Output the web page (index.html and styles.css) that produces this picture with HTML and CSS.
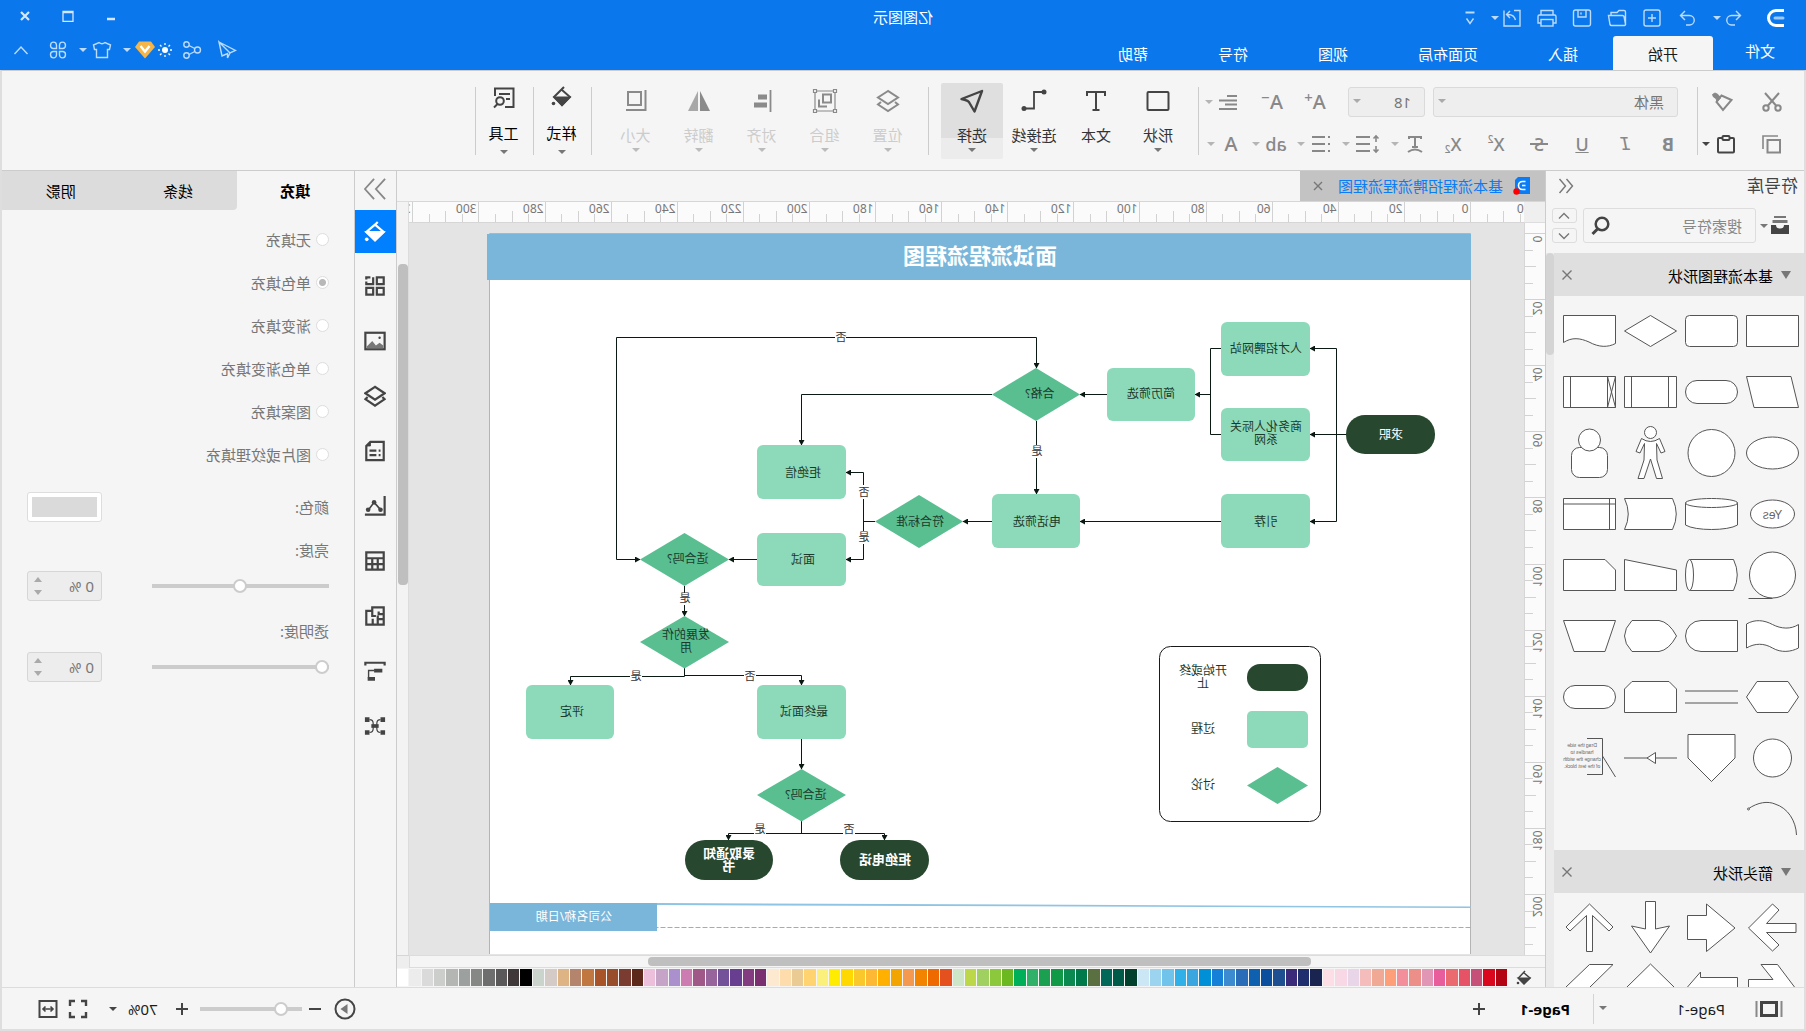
FILE: index.html
```html
<!DOCTYPE html>
<html lang="zh-CN">
<head>
<meta charset="utf-8">
<meta name="viewport" content="width=device-width, initial-scale=1">
<title>亿图图示</title>
<link rel="stylesheet" href="styles.css">
</head>
<body>
<div class="window">
  <header class="topbar">
    <div class="titlebar">
      <div class="quick">
        <svg class="logo" width="20" height="22" viewBox="0 0 20 22"><path d="M2 3.500H10A7.500 7.500 0 0 1 10 18.500H2" fill="none" stroke="#fff" stroke-width="3"/><path d="M3 11H11" stroke="#9cc9fa" stroke-width="3" stroke-linecap="round"/></svg>
        <span class="pair tight">
          <button class="tool" aria-label="撤销"><svg class="thin" width="20" height="20" viewBox="0 0 20 20"><path d="M8 3L3.500 7.500L8 12M4 7.500H12.500A4.500 4.500 0 0 1 12.500 17H9"/></svg></button>
          <button class="caret" aria-label="更多撤销"></button>
        </span>
        <button class="tool" aria-label="重做"><svg class="thin" width="20" height="20" viewBox="0 0 20 20"><path d="M12 3L16.500 7.500L12 12M16 7.500H7.500A4.500 4.500 0 0 0 7.500 17H11"/></svg></button>
        <button class="tool" aria-label="新建"><svg class="thin" width="20" height="20" viewBox="0 0 20 20"><rect x="2" y="2" width="16" height="16" rx="2"/><path d="M10 6V14M6 10H14"/></svg></button>
        <button class="tool" aria-label="打开"><svg class="thin" width="20" height="20" viewBox="0 0 20 20"><path d="M1.500 17V4Q1.500 2.500 3 2.500H8L10 4.500H16V7.500M1.500 16L3 8.500Q3.200 7.500 4.500 7.500H18.500L17 16.500Q16.800 17.500 15.500 17.500H2.500Q1.500 17.500 1.500 16"/></svg></button>
        <button class="tool" aria-label="保存"><svg class="thin" width="20" height="20" viewBox="0 0 20 20"><rect x="1.500" y="2" width="17" height="16" rx="2"/><path d="M6 2V9H14V2M11 4.500V6.500"/></svg></button>
        <button class="tool" aria-label="打印"><svg class="thin" width="20" height="20" viewBox="0 0 20 20"><path d="M4 7V2.500H16V7M4 15H1V8.500Q1 7 2.500 7H17.500Q19 7 19 8.500V15H16"/><rect x="4" y="11.500" width="12" height="6.500"/></svg></button>
        <span class="pair tight">
          <button class="tool" aria-label="导出"><svg class="thin" width="20" height="20" viewBox="0 0 20 20"><path d="M8 2.500H2V18H18V11M18 11L18 2.500M6.500 12Q8 6 15 6.500M12 3L15.500 6.500L12 10"/></svg></button>
          <button class="caret" aria-label="导出选项"></button>
        </span>
        <button class="tool narrow" aria-label="自定义"><svg class="thin" width="10" height="16" viewBox="0 0 10 16"><path d="M0.500 2.500H9.500" stroke-width="2"/><path d="M1.500 8.500L5 13.500L8.500 8.500"/></svg></button>
      </div>
      <h1 class="apptitle">亿图图示</h1>
      <div class="winctl">
        <button aria-label="最小化"><svg width="12" height="12" viewBox="0 0 12 12"><path d="M2 9H10" stroke-width="2.500"/></svg></button>
        <button aria-label="最大化"><svg width="12" height="12" viewBox="0 0 12 12"><path d="M1 1.500H11V11.500H1ZM1 2.500H11" stroke-width="1.300"/></svg></button>
        <button aria-label="关闭"><svg width="12" height="12" viewBox="0 0 12 12"><path d="M2 2L10 10M10 2L2 10" stroke-width="2.200"/></svg></button>
      </div>
    </div>
    <div class="menubar">
      <nav class="menus">
        <a href="#" class="menu file">文件</a>
        <a href="#" class="menu active">开始</a>
        <a href="#" class="menu">插入</a>
        <a href="#" class="menu">页面布局</a>
        <a href="#" class="menu">视图</a>
        <a href="#" class="menu">符号</a>
        <a href="#" class="menu">帮助</a>
      </nav>
      <div class="menutools">
        <button class="tool" aria-label="发送"><svg class="thin" width="20" height="20" viewBox="0 0 20 20"><path d="M18 2L1.500 10.500L7 13L18 2L15 16L9.500 13.500V18L7 13"/></svg></button>
        <button class="tool gapleft" aria-label="共享"><svg class="thin" width="20" height="20" viewBox="0 0 20 20"><circle cx="4.500" cy="10" r="3"/><circle cx="15.500" cy="4.500" r="2.700"/><circle cx="15.500" cy="15.500" r="2.700"/><path d="M7.200 8.500L13 5.500M7.200 11.500L13 14.500"/></svg></button>
        <span class="pair vip">
          <svg width="14" height="14" viewBox="0 0 14 14"><circle cx="7" cy="7" r="3" fill="#fff"/><path d="M7 0V2M7 12V14M0 7H2M12 7H14M2 2L3.500 3.500M10.500 10.500L12 12M12 2L10.500 3.500M3.500 10.500L2 12" stroke="#fff" stroke-width="1.300"/></svg>
          <button class="tool" aria-label="会员"><svg width="20" height="18" viewBox="0 0 20 18"><path d="M4 0.500H16L20 6L10 17.500L0 6Z" fill="#f5b548"/><path d="M5.500 5L10 10.500L14.500 5" fill="none" stroke="#fff" stroke-width="2.400"/></svg></button>
          <button class="caret" aria-label="会员菜单"></button>
        </span>
        <span class="pair">
          <button class="tool" aria-label="主题"><svg class="thin" width="20" height="20" viewBox="0 0 20 20"><path d="M7 2.500Q10 5 13 2.500L18.500 5L17.500 9.500H15.500V17.500H4.500V9.500H2.500L1.500 5Z"/></svg></button>
          <button class="caret" aria-label="主题菜单"></button>
        </span>
        <button class="tool" aria-label="应用"><svg class="thin" width="20" height="20" viewBox="0 0 20 20"><path d="M8.500 8.500H5A3 3.200 0 1 1 8.500 5ZM11.500 8.500H15A3 3.200 0 1 0 11.500 5ZM8.500 11.500H5A3 3.200 0 1 0 8.500 15ZM11.500 11.500H15A3 3.200 0 1 1 11.500 15Z"/></svg></button>
        <button class="tool collapse" aria-label="收起"><svg class="thin" width="16" height="12" viewBox="0 0 16 12"><path d="M1.500 10L8 3L14.500 10"/></svg></button>
      </div>
    </div>
  </header>

  <div class="frame">
    <section class="ribbon" aria-label="开始">
      <div class="clip">
        <div class="row wide">
          <button class="tool" aria-label="剪切"><svg class="bold" width="20" height="20" viewBox="0 0 20 20"><path d="M3 1L14 13.500M17 1L6 13.500"/><circle cx="4" cy="16" r="2.700"/><circle cx="16" cy="16" r="2.700"/></svg></button>
          <button class="tool" aria-label="格式刷"><svg class="bold" width="22" height="20" viewBox="0 0 22 20"><path d="M1.500 8L11.500 3.500L16.500 10L10 18Z"/><path d="M12.500 6L15 2.500L18 1L20.500 2.500L19.500 5L17 6.500L16 9.500Z" fill="currentColor" stroke-width="1"/></svg></button>
        </div>
        <div class="row">
          <button class="tool" aria-label="复制"><svg class="bold" width="20" height="20" viewBox="0 0 20 20"><rect x="2" y="6" width="12.500" height="12.500"/><path d="M4 2H19V15" stroke-width="1.600"/></svg></button>
          <button class="tool dark paste" aria-label="粘贴"><svg class="bold" width="20" height="20" viewBox="0 0 20 20"><rect x="2" y="4" width="16" height="14.500" rx="1"/><rect x="6.500" y="2" width="7" height="4" rx="1" fill="#f5f5f5"/></svg></button>
          <button class="caret dark" aria-label="粘贴选项"></button>
        </div>
      </div>
      <div class="sep near"></div>
      <div class="fonts">
        <div class="row">
          <span class="combo face"><select aria-label="字体"><option>黑体</option></select></span>
          <span class="combo size"><select aria-label="字号"><option>18</option></select></span>
          <span class="adjust">
            <button class="tool glyph large" aria-label="增大字号">A<sup>+</sup></button>
            <button class="tool glyph large" aria-label="减小字号">A<sup>−</sup></button>
            <span class="split"><button class="tool" aria-label="对齐方式"><svg class="bold" width="20" height="20" viewBox="0 0 20 20"><path d="M2 4H12M2 8.500H20M2 12.500H14M2 17H20"/></svg></button><button class="caret" aria-label="对齐选项"></button></span>
          </span>
        </div>
        <div class="row">
          <span class="styles">
            <button class="tool glyph"><b>B</b></button>
            <button class="tool glyph slab"><i>I</i></button>
            <button class="tool glyph"><u>U</u></button>
            <button class="tool glyph strike">S</button>
            <button class="tool glyph">X<sup>2</sup></button>
            <button class="tool glyph">X<sub>2</sub></button>
          </span>
          <span class="splits">
            <span class="split"><button class="tool" aria-label="文字效果"><svg class="bold" width="20" height="20" viewBox="0 0 20 20"><path d="M4 5V3H16V5M10 3V13M7 13H13M3 18Q10 13 17 18"/></svg></button><button class="caret" aria-label="文字效果选项"></button></span>
            <span class="split"><button class="tool spacing" aria-label="行距"><svg class="bold" width="24" height="20" viewBox="0 0 24 20"><path d="M10 3H24M10 10H24M10 17H24"/><path d="M4 2.500V8M1.500 4.500L4 2L6.500 4.500M4 12V17.500M1.500 15.500L4 18L6.500 15.500" stroke-width="1.600"/></svg></button><button class="caret" aria-label="行距选项"></button></span>
            <span class="split"><button class="tool" aria-label="项目符号"><svg class="bold" width="20" height="20" viewBox="0 0 20 20"><path d="M1 3H3M6 3H19M1 10H3M6 10H19M1 17H3M6 17H19"/></svg></button><button class="caret" aria-label="项目符号选项"></button></span>
            <span class="split"><button class="tool glyph">ab</button><button class="caret" aria-label="高亮选项"></button></span>
            <span class="split"><button class="tool glyph large">A</button><button class="caret" aria-label="字体颜色选项"></button></span>
          </span>
        </div>
      </div>
      <div class="sep"></div>
      <div class="big">
        <button class="cmd"><svg class="bold" width="24" height="24" viewBox="0 0 24 24"><rect x="1.500" y="3" width="21" height="18" rx="1"/></svg><span>形状</span><i class="tri"></i></button>
        <button class="cmd"><svg class="bold" width="24" height="24" viewBox="0 0 24 24"><path d="M3 7V3H21V7M12 3V21M8.500 21H15.500"/></svg><span>文本</span><i class="tri none"></i></button>
        <button class="cmd"><svg class="bold" width="26" height="24" viewBox="0 0 26 24"><path d="M5 3H13V19.500H21" stroke-width="1.800"/><circle cx="3" cy="3" r="2.500" fill="currentColor" stroke="none"/><circle cx="23" cy="19.500" r="2.500" fill="currentColor" stroke="none"/></svg><span>连接线</span><i class="tri"></i></button>
        <button class="cmd on"><svg class="bold" width="24" height="24" viewBox="0 0 24 24"><path d="M2 2L22.500 10Q15 11.500 14.500 14L9.500 22.500Z" stroke-width="2.400" stroke-linejoin="round"/></svg><span>选择</span><i class="tri"></i></button>
      </div>
      <div class="sep far"></div>
      <div class="big arrange">
        <button class="cmd" disabled><svg class="bold" width="24" height="24" viewBox="0 0 24 24"><path d="M12 2L22 8.500L12 15L2 8.500ZM5 13L2 15.500L12 22L22 15.500L19 13"/></svg><span>位置</span><i class="tri"></i></button>
        <button class="cmd" disabled><svg class="bold" width="26" height="26" viewBox="0 0 26 26"><path d="M3 3H23V23H3Z" stroke-width="1.200"/><rect x="7" y="6.500" width="8" height="8"/><path d="M11 18.500H19V11.500"/><path d="M1.500 1.500H4.500V4.500H1.500ZM21.500 1.500H24.500V4.500H21.500ZM1.500 21.500H4.500V24.500H1.500ZM21.500 21.500H24.500V24.500H21.500Z" fill="#f5f5f5" stroke-width="1.200"/></svg><span>组合</span><i class="tri"></i></button>
        <button class="cmd" disabled><svg class="bold" width="24" height="24" viewBox="0 0 24 24"><path d="M3.500 1V23" stroke-width="1.800"/><path d="M7 8H16M7 16H20" stroke-width="5"/></svg><span>对齐</span><i class="tri"></i></button>
        <button class="cmd" disabled><svg width="24" height="24" viewBox="0 0 24 24"><path d="M1 22L11 2V22Z" fill="#8a8a8a"/><path d="M13 2L23 22H13Z" fill="#a8a8a8"/></svg><span>翻转</span><i class="tri"></i></button>
        <button class="cmd" disabled><svg class="bold" width="24" height="24" viewBox="0 0 24 24"><rect x="7" y="3" width="13" height="13"/><path d="M2.500 1V21M1.500 21H22"/></svg><span>大小</span><i class="tri"></i></button>
      </div>
      <div class="sep far"></div>
      <div class="big last"><button class="cmd"><svg class="bold" width="24" height="24" viewBox="0 0 24 24"><path d="M10 1L13 4L20 11L12 19L4 11L12 4"/><path d="M5 11.500H19L12 19Z" fill="currentColor"/><circle cx="20.500" cy="17.500" r="1.800" fill="currentColor" stroke="none"/></svg><span>样式</span><i class="tri"></i></button></div>
      <div class="sep"></div>
      <div class="big last"><button class="cmd"><svg class="bold" width="24" height="24" viewBox="0 0 24 24"><path d="M11 21H2.500V2.500H21V10M6 8H17M6 13H10"/><circle cx="16" cy="15" r="3.800"/><path d="M18.500 18L22 21.500"/></svg><span>工具</span><i class="tri"></i></button></div>
      <div class="sep"></div>
    </section>

    <main class="work">
      <aside class="library">
        <div class="libhead"><h2>符号库</h2><button aria-label="收起符号库"><svg class="thin" width="16" height="16" viewBox="0 0 16 16"><path d="M7.500 1L1.500 8L7.500 15M14.500 1L8.500 8L14.500 15"/></svg></button></div>
        <div class="libsearch">
          <button class="tool dark" aria-label="符号分类"><svg width="20" height="20" viewBox="0 0 20 20"><path d="M4 1H16V3H4ZM2.500 5H17.500V8H2.500Z" fill="#777"/><path d="M1 10H6Q6 13.500 10 13.500T14 10H19V19H1Z" fill="#444"/></svg></button>
          <button class="caret dark" aria-label="分类选项"></button>
          <label class="searchbox"><input type="text" placeholder="搜索符号" aria-label="搜索符号"><svg width="20" height="20" viewBox="0 0 20 20"><circle cx="9" cy="8" r="6.300" fill="none" stroke="#444" stroke-width="2.500"/><path d="M13.500 13L18.500 18" stroke="#444" stroke-width="3"/></svg></label>
          <span class="updown"><button aria-label="上一个"><svg class="thin" width="12" height="8" viewBox="0 0 12 8"><path d="M1 6.500L6 1.500L11 6.500"/></svg></button><button aria-label="下一个"><svg class="thin" width="12" height="8" viewBox="0 0 12 8"><path d="M1 1.500L6 6.500L11 1.500"/></svg></button></span>
        </div>
        <div class="libbody">
          <div class="liblist">
            <div class="sechead"><i class="fold"></i><h3>基本流程图形状</h3><button aria-label="关闭"><svg class="thin" width="12" height="12" viewBox="0 0 12 12"><path d="M1.500 1.500L10.500 10.500M10.500 1.500L1.500 10.500"/></svg></button></div>
            <div class="shapes">
              <svg viewBox="0 0 61 61"><path d="M4.500 15.500H56.500V46.500H4.500Z"/></svg>
              <svg viewBox="0 0 61 61"><rect x="4.500" y="15.500" width="52" height="31" rx="4"/></svg>
              <svg viewBox="0 0 61 61"><path d="M4.500 31L30.500 15.500L56.500 31L30.500 46.500Z"/></svg>
              <svg viewBox="0 0 61 61"><path d="M4.500 15.500H56.500V42.500C48 37 40 38 31 42C21 47.500 12 47.500 4.500 43.500Z"/></svg>
              <svg viewBox="0 0 61 61"><path d="M12 15.500H56.500L49 46.500H4.500Z"/></svg>
              <svg viewBox="0 0 61 61"><rect x="4.500" y="19.500" width="52" height="23" rx="11.500"/></svg>
              <svg viewBox="0 0 61 61"><path d="M4.500 15.500H56.500V46.500H4.500ZM12.500 15.500V46.500M49.500 15.500V46.500"/></svg>
              <svg viewBox="0 0 61 61"><path d="M4.500 15.500H56.500V46.500H4.500ZM12.500 15.500V46.500M49.500 15.500V46.500M4.500 15.500L12.500 46.500M12.500 15.500L4.500 46.500"/></svg>
              <svg viewBox="0 0 61 61"><ellipse cx="30.500" cy="31" rx="26" ry="16"/></svg>
              <svg viewBox="0 0 61 61"><circle cx="30.500" cy="31" r="23.500"/></svg>
              <svg viewBox="0 0 61 61"><circle cx="30.500" cy="10.500" r="6"/><path d="M21.500 16.500L16 29.500L20 31L24.500 21.500L24 38L18.500 56.500H24.500L30.500 37L37 56.500H43L37 38L36.500 21.500L41 31L45 29.500L39.500 16.500Q30.500 22.500 21.500 16.500Z"/></svg>
              <svg viewBox="0 0 61 61"><rect x="12.500" y="25.500" width="36" height="30" rx="8"/><circle cx="30.500" cy="18" r="11"/></svg>
              <svg viewBox="0 0 61 61"><ellipse cx="30.500" cy="31" rx="22" ry="14"/><text x="30.500" y="36" font-size="12" text-anchor="middle">Yes</text></svg>
              <svg viewBox="0 0 61 61"><path d="M4.500 19.500V42C14 48 47 48 56.500 42V19.500"/><ellipse cx="30.500" cy="20" rx="26" ry="4.500"/></svg>
              <svg viewBox="0 0 61 61"><path d="M8.500 15.500H56.500Q49 31 56.500 46.500H8.500Q1 31 8.500 15.500Z"/></svg>
              <svg viewBox="0 0 61 61"><path d="M4.500 15.500H56.500V46.500H4.500ZM10.500 15.500V46.500M4.500 21H56.500"/></svg>
              <svg viewBox="0 0 61 61"><circle cx="30.500" cy="31" r="23"/><path d="M30.500 54.500H54.500"/></svg>
              <svg viewBox="0 0 61 61"><path d="M52.500 15.500H8.500Q1 31 8.500 46.500H52.500"/><ellipse cx="52.500" cy="31" rx="4" ry="15.500"/></svg>
              <svg viewBox="0 0 61 61"><path d="M56.500 15.500L4.500 26V46.500H56.500Z"/></svg>
              <svg viewBox="0 0 61 61"><path d="M56.500 15.500H15L4.500 26V46.500H56.500Z"/></svg>
              <svg viewBox="0 0 61 61"><path d="M4.500 19.500C12 24.500 22 24 30.500 19.500C39 15 48 14 56.500 19V43C48 38 39 38 30.500 43C22 48 12 47 4.500 43Z"/></svg>
              <svg viewBox="0 0 61 61"><path d="M4.500 15.500H41A15.500 15.500 0 0 1 41 46.500H4.500Z"/></svg>
              <svg viewBox="0 0 61 61"><path d="M4.500 31Q12 17 22 15.500H49Q64 31 49 46.500H22Q12 45 4.500 31Z"/></svg>
              <svg viewBox="0 0 61 61"><path d="M4.500 15.500H56.500L46 46.500H15Z"/></svg>
              <svg viewBox="0 0 61 61"><path d="M4.500 31L15 15.500H46L56.500 31L46 46.500H15Z"/></svg>
              <svg viewBox="0 0 61 61"><path d="M4 25H57M4 37H57"/></svg>
              <svg viewBox="0 0 61 61"><path d="M12 15.500H49L56.500 23V46.500H4.500V23Z"/></svg>
              <svg viewBox="0 0 61 61"><rect x="4.500" y="19.500" width="52" height="23" rx="11.500"/></svg>
              <svg viewBox="0 0 61 61"><circle cx="30.500" cy="31" r="19"/></svg>
              <svg viewBox="0 0 61 61"><path d="M7 7.500H54V31L30.500 54.500L7 31Z"/></svg>
              <svg viewBox="0 0 61 61"><path d="M4 31H57"/><path d="M25.500 25.500V36.500L34 31Z"/></svg>
              <svg viewBox="0 0 61 61"><path d="M33 11.500H17.500V47.500H33M17.500 29L4.500 50" fill="none"/><g class="note"><text x="38" y="20">Drag the side</text><text x="38" y="27">handles to</text><text x="38" y="34">change the width</text><text x="38" y="41">of the text block.</text></g></svg>
              <svg viewBox="0 0 61 61"><path d="M55 21C45 14 35 13 28 16C15 20 7 33 6.500 47" fill="none"/><circle cx="54.500" cy="21" r="1"/></svg>
            </div>
            <div class="sechead"><i class="fold"></i><h3>箭头形状</h3><button aria-label="关闭"><svg class="thin" width="12" height="12" viewBox="0 0 12 12"><path d="M1.500 1.500L10.500 10.500M10.500 1.500L1.500 10.500"/></svg></button></div>
            <div class="shapes">
              <svg viewBox="0 0 61 61"><path d="M54.500 31L30.500 7L24 13L36.500 26.500H7V35.500H36.500L24 48L30.500 54Z"/></svg>
              <svg viewBox="0 0 61 61"><path d="M7 31L35.500 7V18.500H54.500V42.500H35.500V54.500Z"/></svg>
              <svg viewBox="0 0 61 61"><path d="M25.500 4.500H35.500V32L49.500 29L30.500 56L11.500 29L25.500 32Z"/></svg>
              <svg viewBox="0 0 61 61"><path d="M30.500 7L54 30L50 34L33.500 18.500V54.500H27.500V18.500L11 34L7 30Z"/></svg>
              <svg viewBox="0 0 61 61"><path d="M42 6.500H25.500L7 31L25.500 56H42L30 40H54.500V21.500H30Z"/></svg>
              <svg viewBox="0 0 61 61"><path d="M54.500 29L41.500 14V19.500H4.500V40H41.500V46Z"/></svg>
              <svg viewBox="0 0 61 61"><path d="M30.500 6L54 29L30.500 52L7 29Z"/></svg>
              <svg viewBox="0 0 61 61"><path d="M7 6.500H30.500L54 29L30.500 52H7L30 29Z"/></svg>
            </div>
          </div>
          <div class="track"><div class="thumb"></div></div>
        </div>
      </aside>

      <section class="editor">
        <div class="doctabs">
          <a href="#" class="doctab"><svg width="18" height="20" viewBox="0 0 18 20"><path d="M1 1H13L16 4V18H1Z" fill="#0a7cf5"/><path d="M5.500 5.500H8.500A4 4 0 0 1 8.500 13.500H5.500M5.500 9.500H9" fill="none" stroke="#fff" stroke-width="1.600"/><circle cx="14.500" cy="15.500" r="3.200" fill="#f00"/></svg><span>基本流程招聘流程流程图</span></a>
          <button class="tabclose" aria-label="关闭标签"><svg class="thin" width="12" height="12" viewBox="0 0 12 12"><path d="M2 2L10 10M10 2L2 10"/></svg></button>
        </div>
        <div class="sheet">
          <div class="corner"></div>
          <div class="hruler"><svg id="hruler" width="1800" height="21"></svg></div>
          <div class="vruler"><svg id="vruler" width="21" height="1400"></svg></div>
          <div class="canvas">
            <svg class="diagram" width="1115" height="731" viewBox="282 223 1115 731">
              <defs><marker id="tip" markerWidth="6" markerHeight="6" refX="5" refY="3" orient="auto-start-reverse" markerUnits="userSpaceOnUse"><path d="M0 0L5.500 3L0 6Z" fill="#0a1a12"/></marker></defs>
              <path class="page" d="M335.500 233.500H1316.500V960H335.500Z"/>
              <path class="band" d="M335 234H1319V280H335Z"/>
              <text class="heading" x="826" y="264">面试流程流程图</text>
              <g class="wires">
                <path d="M460 434.500H496" marker-end="url(#tip)"/>
                <path d="M496 348.500H469.500V521.500H496" marker-start="url(#tip)" marker-end="url(#tip)"/>
                <path d="M585 348.500H595.500V434.500H585"/>
                <path d="M595.500 394.500H611" marker-end="url(#tip)"/>
                <path d="M699 394.500H726" marker-end="url(#tip)"/>
                <path d="M585 521.500H726" marker-end="url(#tip)"/>
                <path d="M769.500 421V494" marker-end="url(#tip)"/>
                <path d="M814 394.500H1004.500V445" marker-end="url(#tip)"/>
                <path d="M769.500 368V337.500H1189.500V559.500H1166" marker-start="url(#tip)" marker-end="url(#tip)"/>
                <path d="M814 521.500H843" marker-end="url(#tip)"/>
                <path d="M931 521.500H942.500"/>
                <path d="M960 472.500H942.500V559.500H960" marker-start="url(#tip)" marker-end="url(#tip)"/>
                <path d="M1049 559.500H1077" marker-end="url(#tip)"/>
                <path d="M1121.500 586V616" marker-end="url(#tip)"/>
                <path d="M1121.500 668V675.500H1004.500V685" marker-end="url(#tip)"/>
                <path d="M1121.500 668V676.500H1235.500V685" marker-end="url(#tip)"/>
                <path d="M1004.500 739V769" marker-end="url(#tip)"/>
                <path d="M1004.500 821V833.500"/>
                <path d="M1077.500 840V833.500H921.500V840" marker-start="url(#tip)" marker-end="url(#tip)"/>
              </g>
              <g class="start">
                <rect x="371" y="415" width="89" height="39" rx="19"/>
                <rect x="877" y="840" width="89" height="40" rx="20"/>
                <rect x="1033" y="840" width="88" height="40" rx="20"/>
              </g>
              <g class="process">
                <rect x="496" y="322" width="89" height="54" rx="6"/>
                <rect x="496" y="408" width="89" height="53" rx="6"/>
                <rect x="496" y="494" width="89" height="54" rx="6"/>
                <rect x="611" y="368" width="88" height="53" rx="6"/>
                <rect x="726" y="494" width="88" height="54" rx="6"/>
                <rect x="960" y="445" width="89" height="54" rx="6"/>
                <rect x="960" y="533" width="89" height="53" rx="6"/>
                <rect x="960" y="685" width="89" height="54" rx="6"/>
                <rect x="1192" y="685" width="88" height="54" rx="6"/>
              </g>
              <g class="decision">
                <path d="M726 394.500L770 368L814 394.500L770 421Z"/>
                <path d="M843 521.500L887 495L931 521.500L887 548Z"/>
                <path d="M1077 559.500L1121.500 533L1166 559.500L1121.500 586Z"/>
                <path d="M1077 642L1121.500 616L1166 642L1121.500 668.500Z"/>
                <path d="M960 795L1004.500 769L1049 795L1004.500 821.500Z"/>
              </g>
              <g class="gaps">
                <rect x="960" y="331" width="11" height="12"/><rect x="764" y="445" width="11" height="13"/>
                <rect x="937" y="485" width="11" height="14"/><rect x="937" y="531" width="11" height="13"/>
                <rect x="1115" y="593" width="12" height="12"/><rect x="1050" y="670" width="12" height="12"/>
                <rect x="1164" y="670" width="12" height="12"/><rect x="1040" y="828" width="12" height="10"/><rect x="951" y="828" width="12" height="10"/>
              </g>
              <g class="labels">
                <text class="light" x="415" y="439">求职</text>
                <text x="540" y="353">人才招聘网站</text>
                <text x="540" y="431">商务化人际关</text><text x="540" y="444">系网</text>
                <text x="540" y="526">引荐</text>
                <text x="655" y="398">简历筛选</text>
                <text x="766" y="398">合格?</text>
                <text x="769" y="526">电话筛选</text>
                <text x="886" y="526">符合标准</text>
                <text x="1003" y="477">拒绝信</text>
                <text x="1003" y="564">面试</text>
                <text x="1118" y="563">适合吗?</text>
                <text x="1120" y="639">发展的作</text><text x="1120" y="652">用</text>
                <text x="1002" y="716">最终面试</text>
                <text x="1234" y="716">评定</text>
                <text x="1000" y="799">适合吗?</text>
                <text class="light strong" x="921" y="864">拒绝电话</text>
                <text class="light strong" x="1077" y="858">录取通知</text><text class="light strong" x="1077" y="871">书</text>
              </g>
              <g class="labels small">
                <text x="965" y="341">否</text><text x="769" y="455">是</text><text x="942" y="496">否</text><text x="942" y="541">是</text>
                <text x="1121" y="602">是</text><text x="1056" y="680">否</text><text x="1170" y="680">是</text><text x="957" y="833">否</text><text x="1046" y="833">是</text>
              </g>
              <rect class="legend" x="485.500" y="646.500" width="161" height="175" rx="11"/>
              <g class="start"><rect x="498" y="664" width="61" height="27" rx="13"/></g>
              <g class="process"><rect x="498" y="711" width="61" height="37" rx="5"/></g>
              <g class="decision"><path d="M498 785.500L528.500 767L559 785.500L528.500 804Z"/></g>
              <g class="labels"><text x="603" y="675">开始或终</text><text x="603" y="688">止</text><text x="603" y="733">过程</text><text x="603" y="789">讨论</text></g>
              <path class="taper" d="M335 906.500V908L1149 905V903Z"/>
              <path class="dashes" d="M335.500 927.500H1149"/>
              <path class="band" d="M1149 903H1316V931H1149Z"/>
              <g class="labels"><text class="light" x="1232" y="921">公司名称/日期</text></g>
            </svg>
          </div>
          <div class="vscroll"><div class="thumb"></div></div>
          <div class="hscroll"><div class="thumb"></div></div>
          <div class="corner end"></div>
        </div>
        <div class="palette">
          <button class="tool dark" aria-label="填充颜色"><svg class="bold" width="16" height="16" viewBox="0 0 16 16"><path d="M7 1L13.500 8L8 13.500L2 8L8.500 2.500" stroke-width="1.500"/><path d="M3 8.500H13L8 13.500Z" fill="currentColor"/><circle cx="14" cy="13" r="1.300" fill="currentColor" stroke="none"/></svg></button>
          <div class="swatches" id="swatches"></div>
        </div>
      </section>

      <nav class="strip">
        <button class="fold" aria-label="收起面板"><svg width="24" height="24" viewBox="0 0 24 24"><path d="M1 1L11 12L1 23M13 1L23 12L13 23" stroke-width="2"/></svg></button>
        <button class="on" aria-label="填充"><svg width="24" height="24" viewBox="0 0 24 24"><path d="M9 1L12 4L21.500 12L12 21L2.500 12L12 4"/><path d="M3 12H21L12 21Z" fill="currentColor"/><circle cx="21" cy="20" r="2" fill="currentColor" stroke="none"/></svg></button>
        <button aria-label="符号"><svg width="24" height="24" viewBox="0 0 24 24"><path d="M2.500 2.500H10V10H2.500ZM2.500 14H10V21.500H2.500ZM14 14H21.500V21.500H14ZM14 2.500V10H21.500V7M17 2.500H21.500V5"/></svg></button>
        <button aria-label="图片"><svg width="24" height="24" viewBox="0 0 24 24"><rect x="1.500" y="3" width="21" height="18"/><path d="M3 20V17L7 14L11 17L15 12L21 18V20Z" fill="#777" stroke="none"/><circle cx="7" cy="8.500" r="1.300" fill="currentColor" stroke="none"/></svg></button>
        <button aria-label="图层"><svg width="24" height="24" viewBox="0 0 24 24"><path d="M12 2L22.500 9L12 16L1.500 9ZM4 13L1.500 15.500L12 22.500L22.500 15.500L20 13"/></svg></button>
        <button aria-label="文档"><svg width="24" height="24" viewBox="0 0 24 24"><path d="M2.500 2H17L21.500 6.500V22H2.500ZM6 11.500H8M10.500 11.500H18M6 16.500H8M10.500 16.500H18"/><path d="M17 2V6.500H21.500Z" fill="currentColor" stroke-width="1"/></svg></button>
        <button aria-label="图表"><svg width="24" height="24" viewBox="0 0 24 24"><path d="M1.500 1V21.500H23"/><path d="M6 16L13 8L19 16" stroke-width="1.800"/><g fill="currentColor" stroke="none"><circle cx="6" cy="16" r="2.500"/><circle cx="13" cy="8" r="2.500"/><circle cx="19.500" cy="16" r="2.500"/></g></svg></button>
        <button aria-label="表格"><svg width="24" height="24" viewBox="0 0 24 24"><path d="M2.500 2.500H21.500V21.500H2.500ZM2.500 9H21.500M2.500 15.500H21.500M9 9V21.500M15 9V21.500"/></svg></button>
        <button aria-label="平面图"><svg width="24" height="24" viewBox="0 0 24 24"><path d="M2.500 2.500H15V6.500H21.500V21.500H2.500ZM2.500 10H8V7M2.500 15.500H9V21.500M14.500 15V21.500M9 11.500V15.500M15 6.500V12H11"/></svg></button>
        <button aria-label="时间线"><svg width="24" height="24" viewBox="0 0 24 24"><path d="M1.500 6V3H22.500V6"/><path d="M4 11.500H13M12 20.500H20" stroke-width="4"/><path d="M13 11.500H19V20" stroke-width="1.500"/></svg></button>
        <button aria-label="思维导图"><svg width="24" height="24" viewBox="0 0 24 24"><path d="M1 5H6M18 5H23M1 19H6M18 19H23" stroke-width="5"/><path d="M8 12H16" stroke-width="4"/><path d="M6 5Q10 5 10 9V15Q10 19 6 19M18 5Q14 5 14 9V15Q14 19 18 19" stroke-width="1.300"/></svg></button>
      </nav>

      <aside class="props">
        <div class="proptabs"><button class="on">填充</button><button class="first">线条</button><button>阴影</button></div>
        <form class="propbody">
          <div class="radios">
            <label><input type="radio" name="fill" disabled>无填充</label>
            <label><input type="radio" name="fill" disabled checked>单色填充</label>
            <label><input type="radio" name="fill" disabled>渐变填充</label>
            <label><input type="radio" name="fill" disabled>单色渐变填充</label>
            <label><input type="radio" name="fill" disabled>图案填充</label>
            <label><input type="radio" name="fill" disabled>图片或纹理填充</label>
          </div>
          <div class="field color"><label for="color">颜色:</label><button type="button" id="color" class="chip" aria-label="颜色"><span></span></button></div>
          <label class="caption" for="bright">亮度:</label>
          <div class="field"><input id="bright" type="range" min="0" max="100" value="50"><span class="spin"><input type="text" value="0 %" aria-label="亮度值"><span><button type="button" aria-label="增加"></button><button type="button" class="down" aria-label="减少"></button></span></span></div>
          <label class="caption" for="alpha">透明度:</label>
          <div class="field"><input id="alpha" type="range" min="0" max="100" value="0"><span class="spin"><input type="text" value="0 %" aria-label="透明度值"><span><button type="button" aria-label="增加"></button><button type="button" class="down" aria-label="减少"></button></span></span></div>
        </form>
      </aside>
    </main>

    <footer class="status">
      <button class="tool dark pages" aria-label="页面视图"><svg width="28" height="18" viewBox="0 0 28 18"><path d="M1.500 1V17M26.500 1V17" stroke="#888" stroke-width="2"/><rect x="6.500" y="2.500" width="15" height="13" fill="none" stroke="#444" stroke-width="3"/></svg></button>
      <span class="combo plain"><select aria-label="页面"><option>Page-1</option></select></span>
      <a href="#" class="pagetab">Page-1</a>
      <button class="tool dark" aria-label="添加页面"><svg class="bold" width="14" height="14" viewBox="0 0 14 14"><path d="M7 1V13M1 7H13"/></svg></button>
      <div class="zoom">
        <button class="tool dark" aria-label="播放"><svg width="22" height="22" viewBox="0 0 22 22"><circle cx="11" cy="11" r="9.500" fill="none" stroke="#444" stroke-width="2"/><path d="M8.500 6L15.500 11L8.500 16Z" fill="#777"/></svg></button>
        <button class="tool dark minus" aria-label="缩小"><svg class="bold" width="14" height="14" viewBox="0 0 14 14"><path d="M1 7H13"/></svg></button>
        <input type="range" min="0" max="100" value="15" aria-label="缩放">
        <button class="tool dark plus" aria-label="放大"><svg class="bold" width="14" height="14" viewBox="0 0 14 14"><path d="M7 1V13M1 7H13"/></svg></button>
        <button class="percent">70%</button>
        <button class="caret dark" aria-label="缩放选项"></button>
        <button class="tool dark full" aria-label="全屏"><svg class="bold" width="20" height="20" viewBox="0 0 20 20"><path d="M2 7V2H7M13 2H18V7M18 13V18H13M7 18H2V13" stroke-width="2.400"/></svg></button>
        <button class="tool dark" aria-label="适应宽度"><svg class="bold" width="20" height="20" viewBox="0 0 20 20"><rect x="1.500" y="2" width="17" height="16"/><path d="M5 10H15M7.500 7.500L5 10L7.500 12.500M12.500 7.500L15 10L12.500 12.500" stroke-width="1.600"/></svg></button>
      </div>
    </footer>
  </div>
</div>
<script src="app.js"></script>
</body>
</html>
```
FILE: styles.css
```css
* { box-sizing: border-box; }

body {
  margin: 0;
  font-family: "Noto Sans", "Noto Sans CJK SC", sans-serif;
  font-size: 15px;
  color: #1a1a1a;
  background: #f5f5f5;
}

h1, h2, h3 { margin: 0; font-weight: 400; }

button, input, select { font: inherit; color: inherit; }

button {
  display: flex;
  align-items: center;
  justify-content: center;
  padding: 0;
  border: 0;
  background: none;
}

a { color: inherit; text-decoration: none; }

/* the whole interface is laid out left to right and shown mirrored */
.window {
  display: flex;
  flex-direction: column;
  height: 100vh;
  overflow: hidden;
  transform: scaleX(-1);
}

svg { display: block; flex: none; }

.thin { fill: none; stroke: currentColor; stroke-width: 1.4; }
.bold { fill: none; stroke: currentColor; stroke-width: 2; }

.tool { width: 20px; height: 20px; flex: none; }

.caret { width: 10px; height: 20px; flex: none; }

.caret::before,
.tri,
.combo::after {
  content: "";
  display: block;
  border: 4px solid transparent;
  border-bottom-width: 0;
  border-top-color: currentColor;
}

.pair { display: flex; align-items: center; gap: 4px; }
.pair.tight { gap: 2px; }

/* title bar and menus */
.topbar { background: #0a77ec; color: #fff; height: 70px; flex: none; }

.titlebar {
  display: grid;
  grid-template-columns: 1fr auto 1fr;
  align-items: center;
  height: 36px;
}

.quick { display: flex; align-items: center; gap: 15px; padding-left: 20px; color: #bddbfb; }
.logo { margin-right: 7px; }
.narrow { width: 10px; }
.apptitle { font-size: 15px; line-height: 20px; padding-bottom: 2px; }

.winctl { display: flex; justify-content: flex-end; gap: 31px; padding-right: 19px; padding-bottom: 4px; }
.winctl svg { fill: none; stroke: #d4e7fc; }

.menubar { display: flex; justify-content: space-between; height: 34px; }
.menus { display: flex; }
.menu { padding: 0 35px; line-height: 36px; }
.menu.file { padding: 0 32px 0 31px; line-height: 30px; }
.menu.active { background: #f5f5f5; color: #1a1a1a; border-radius: 3px 3px 0 0; }

.menutools { display: flex; align-items: center; gap: 10px; padding-right: 13px; padding-bottom: 6px; color: #bddbfb; }
.gapleft { margin-left: 5px; }
.vip { gap: 3px; }
.collapse { width: 16px; margin-left: 9px; }

/* framed area below the title bar */
.frame {
  flex: 1;
  min-height: 0;
  display: flex;
  flex-direction: column;
  border: 2px solid #dedede;
  border-top: 1px solid #ccc;
  background: #f5f5f5;
}

.ribbon {
  display: flex;
  height: 100px;
  flex: none;
  border-bottom: 1px solid #ccc;
  color: #888;
}

.sep { width: 1px; height: 68px; margin-top: 16px; background: #ccc; flex: none; }
.sep.near { margin-left: 3px; }
.sep.far { margin-left: 12px; }

.dark { color: #444; }

.clip, .fonts { display: flex; flex-direction: column; gap: 12px; padding-top: 16px; }
.clip { padding-left: 22px; }
.clip .row { gap: 5px; }
.clip .wide { gap: 30px; }
.paste { margin-left: 21px; }
.row { display: flex; align-items: center; height: 30px; }

.fonts { padding-left: 19px; width: 498px; }
.fonts .row { gap: 8px; }

.combo { display: flex; align-items: center; position: relative; }
.combo::after { position: absolute; right: 5px; top: 12px; color: #aaa; }
.combo select {
  width: 100%;
  height: 30px;
  padding: 0 13px;
  appearance: none;
  border: 1px solid #dadada;
  border-radius: 3px;
  background: #eee;
  color: #777;
}
.face { width: 245px; }
.size { width: 77px; }

.adjust, .styles { display: flex; align-items: center; gap: 23px; }
.adjust { margin-left: 15px; }
.splits { display: flex; gap: 10px; margin-left: 10px; }
.split { display: flex; gap: 5px; }
.split .caret { color: #b5b5b5; }
.spacing { width: 24px; }

.glyph { font-size: 18px; line-height: 20px; font-weight: 500; }
.glyph sup, .glyph sub { font-size: 10px; line-height: 10px; }
.glyph sup { align-self: flex-start; }
.glyph sub { align-self: flex-end; }
.glyph.large { font-size: 20px; }
.glyph.large sup { font-size: 15px; }
.glyph b { font-weight: 700; }
.slab { font-family: "DejaVu Sans Mono", monospace; }
.strike { background: linear-gradient(currentColor, currentColor) center / 18px 2px no-repeat; }

.big { display: flex; padding: 12px 0 0 9px; color: #444; }
.cmd {
  display: grid;
  grid-template-rows: 36px 32px 8px;
  place-items: center;
  width: 62px;
  height: 76px;
}
.cmd span { line-height: 20px; color: #333; }
.tri { align-self: start; color: #777; margin-top: -3px; }
.tri.none { visibility: hidden; }
.cmd.on { background: linear-gradient(#dfdfdf 55px, #ececec 55px); border-radius: 2px; }
.arrange .cmd { width: 63px; color: #8a8a8a; }
.arrange .cmd span { color: #ccc; }
.arrange .tri { color: #bbb; }
.big.last { padding: 9px 0 0 2px; }
.big.last .cmd { width: 55px; grid-template-rows: 36px 34px 6px; }
.big.last .cmd span { color: #000; }
.big.last .tri { margin-top: 0; }

.work { flex: 1; min-height: 0; display: flex; }

/* symbol library */
.library {
  width: 259px;
  flex: none;
  display: flex;
  flex-direction: column;
  border-right: 1px solid #ccc;
}

.libhead { display: flex; align-items: center; justify-content: space-between; height: 30px; padding: 0 12px 0 6px; color: #777; }
.libhead h2 { font-size: 17px; line-height: 24px; color: #444; }

.libsearch { display: flex; align-items: center; height: 52px; padding: 7px 6px 10px 14px; }
.libsearch .caret { margin: 0 3px 0 1px; color: #777; }
.libsearch .tool { margin-top: -2px; }
.searchbox {
  display: flex;
  align-items: center;
  flex: 1;
  min-width: 0;
  height: 35px;
  padding: 0 7px 0 13px;
  border: 1px solid #ddd;
  border-radius: 3px;
}
.searchbox input { flex: 1; min-width: 0; border: 0; padding: 0; background: none; outline: 0; }
.searchbox input::placeholder { color: #888; opacity: 1; }
.updown { display: flex; flex-direction: column; gap: 5px; margin-left: 6px; color: #777; }
.updown button { width: 25px; height: 15px; border: 1px solid #ddd; border-radius: 3px; }

.libbody { flex: 1; min-height: 0; display: flex; }
.liblist { flex: 1; overflow: hidden; }
.track { width: 8px; background: #ebebeb; }
.track .thumb { height: 102px; border-radius: 4px; background: #d4d4d4; }

.sechead { display: flex; align-items: center; gap: 8px; height: 43px; padding: 0 7px 0 13px; background: #dfdfdf; }
.sechead h3 { flex: 1; font-size: 15px; line-height: 20px; color: #000; padding-top: 3px; }
.sechead button { color: #777; }
.sechead .fold { border: 5px solid transparent; border-top: 8px solid #777; border-bottom: 0; }

.shapes { display: grid; grid-template-columns: repeat(4, 61px); grid-auto-rows: 61px; padding: 4px 0 1px 1px; }
.shapes svg { width: 61px; height: 61px; fill: #fff; stroke: #555; stroke-width: 1; }
.shapes text { fill: #666; stroke: none; font-family: "Liberation Sans", sans-serif; }
.note text { font-size: 5px; text-anchor: middle; }

/* editor */
.editor { flex: 1; min-width: 0; display: flex; flex-direction: column; }
.doctabs { display: flex; height: 30px; }
.doctab { display: flex; align-items: center; gap: 10px; padding-left: 14px; background: #c3c3c3; color: #0a7cf5; line-height: 20px; }
.tabclose { width: 38px; padding-left: 2px; background: #c3c3c3; color: #777; }

.sheet {
  flex: 1;
  min-height: 0;
  display: grid;
  grid-template-columns: 21px 1fr 12px;
  grid-template-rows: 22px 1fr 13px;
}
.corner { background: #efefef; border-top: 1px solid #d6d6d6; border-bottom: 1px solid #ddd; }
.hruler { grid-area: 1 / 2; overflow: hidden; background: #fbfbfb; border: 1px solid #d6d6d6; border-width: 1px 0; }
.vruler { grid-area: 2 / 1; overflow: hidden; background: #fbfbfb; border-right: 1px solid #d6d6d6; }
.hruler path, .vruler path { stroke: #d2d2d2; fill: none; }
.hruler text, .vruler text { font-size: 12px; fill: #777; }

.canvas { grid-area: 2 / 2; overflow: hidden; background: #e4e4e4; min-width: 0; min-height: 0; }
.vscroll { grid-area: 1 / 3 / 3 / 4; padding: 62px 1px 0 0; border: 1px solid #dcdcdc; border-width: 1px 0 0 1px; background: #f3f3f3; }
.vscroll .thumb { height: 321px; border-radius: 4px; background: #bfbfbf; }
.hscroll { grid-area: 3 / 1 / 4 / 3; padding: 1px 238px 1px 234px; border: 1px solid #dcdcdc; border-left: 0; }
.hscroll .thumb { height: 9px; border-radius: 4px; background: #bfbfbf; }
.corner.end { grid-area: 3 / 3; background: #eee; border-bottom: 0; }

.page { fill: #fff; stroke: #b4b4b4; }
.band { fill: #79b6da; }
.heading { fill: #fff; font-size: 22px; font-weight: 700; text-anchor: middle; }
.wires path { fill: none; stroke: #0a1a12; }
.start { fill: #27472f; }
.process { fill: #8ddabb; }
.decision { fill: #59be90; }
.gaps { fill: #fff; }
.labels text { font-size: 12px; fill: #1c3a2c; text-anchor: middle; }
.labels .light { fill: #fff; }
.labels .strong { font-size: 13px; font-weight: 700; }
.labels.small text { font-size: 11px; fill: #333; }
.legend { fill: #fff; stroke: #1a1a1a; }
.taper { fill: #8fc4e2; }
.dashes { fill: none; stroke: #aaa; stroke-dasharray: 5 2; }

.palette { display: flex; align-items: center; height: 19px; padding-left: 11px; gap: 7px; }
.swatches { flex: 1; display: flex; gap: 1px; height: 17px; }
.swatches button { flex: 1; }

/* panel switcher */
.strip { width: 43px; flex: none; border: 1px solid #ccc; border-width: 0 1px; color: #444; }
.strip button { width: 41px; height: 55px; }
.strip svg { width: 22px; height: 22px; fill: none; stroke: currentColor; stroke-width: 2.4; }
.strip .fold { height: 39px; padding-bottom: 3px; color: #888; }
.strip .on { height: 43px; margin-bottom: 5px; background: #0080ff; color: #fff; }

/* property panel */
.props { width: 352px; flex: none; color: #777; }
.proptabs { display: flex; height: 39px; }
.proptabs button { flex: 1; background: #dcdcdc; color: #000; }
.proptabs .on { background: none; font-weight: 700; }
.proptabs .first { border-bottom-left-radius: 4px; }

.propbody { padding: 8px 25px 0 25px; }
.radios label { display: flex; align-items: center; gap: 5px; height: 43px; line-height: 20px; }
.radios input {
  appearance: none;
  width: 13px;
  height: 13px;
  margin: 0;
  border: 1px solid #ddd;
  border-radius: 50%;
  background: #fff;
}
.radios input:checked { background: radial-gradient(circle, #b8b8b8 3px, #fff 4px); }

.field { display: flex; align-items: center; justify-content: space-between; height: 30px; }
.field.color { height: 62px; }
.field label { padding-bottom: 2px; }
.caption { display: block; height: 33px; line-height: 24px; }
.field:not(.color) + .caption { margin-top: 18px; }

.chip { width: 75px; height: 30px; padding: 4px; border: 1px solid #ddd; border-radius: 3px; background: #fff; }
.chip span { width: 65px; height: 20px; background: #dadada; }

input[type="range"] {
  appearance: none;
  width: 177px;
  height: 14px;
  margin: 0;
  background: linear-gradient(#ccc, #ccc) center / 100% 4px no-repeat;
}
input[type="range"]::-webkit-slider-thumb {
  appearance: none;
  width: 14px;
  height: 14px;
  border: 2px solid #ccc;
  border-radius: 50%;
  background: #fff;
}

.spin { display: flex; width: 75px; height: 30px; padding: 0 6px 0 7px; border: 1px solid #d6d6d6; border-radius: 3px; background: #ededed; }
.spin input { flex: 1; min-width: 0; padding: 0; border: 0; background: none; }
.spin span { display: flex; flex-direction: column; justify-content: center; gap: 8px; }
.spin button { border: 4px solid transparent; border-top: 0; border-bottom: 5px solid #aaa; }
.spin .down { border-bottom: 0; border-top: 5px solid #aaa; }

/* status bar */
.status { display: flex; align-items: center; height: 42px; flex: none; border-top: 1px solid #dcdcdc; padding: 0 36px 0 21px; color: #1a1a1a; }
.pages { width: 28px; }
.combo.plain { width: 162px; border-right: 1px solid #d4d4d4; }
.combo.plain::after { color: #777; top: 12px; }
.combo.plain select { border: 0; background: none; color: #1a1a1a; padding: 0 30px; }
.pagetab { padding: 0 31px 0 23px; font-weight: 700; color: #000; }
.zoom { display: flex; align-items: center; margin-left: auto; }
.minus { width: 14px; margin: 0 6px 0 13px; }
.plus { width: 14px; margin: 0 9px 0 11px; }
.zoom input { width: 102px; }
.percent { margin: 0 10px 0 8px; }
.full { margin: 0 10px 0 20px; }
```
FILE: app.js
```js
const NS = "http://www.w3.org/2000/svg";
const STEP = 66.1;

function add(svg, name, attrs, text) {
  const el = document.createElementNS(NS, name);
  for (const key in attrs) el.setAttribute(key, attrs[key]);
  if (text !== undefined) el.textContent = text;
  svg.appendChild(el);
}

// Ruler ticks: one long, one medium and two short per 20 units.
function ticks(origin, limit, draw) {
  for (let i = -4; ; i++) {
    const pos = Math.round(origin + (i * STEP) / 4);
    if (pos > limit) break;
    draw(pos + 0.5, i);
  }
}

const h = document.getElementById("hruler");
ticks(53, 1125, (p, i) => {
  const top = i % 4 === 0 ? 0 : i % 2 === 0 ? 9 : 12;
  add(h, "path", { d: `M${p} ${top}V21` });
  if (i % 4 === 0) add(h, "text", { x: p + 2, y: 11 }, i * 5);
});

const v = document.getElementById("vruler");
ticks(10, 1400, (p, i) => {
  const left = i % 4 === 0 ? 0 : i % 2 === 0 ? 9 : 12;
  add(v, "path", { d: `M${left} ${p}H21` });
  if (i % 4 === 0) add(v, "text", { transform: `translate(12 ${p + 2}) rotate(-90)`, "text-anchor": "end" }, i * 5);
});

const colors = (
  "b30414 d9081f c75078 e65366 ea6a6f e85d9b e096b4 ec8f88 f28f9b ff9f7a f0a994 f4bcba e8d5e8 f8d8e4 fddde6 " +
  "1a2450 1f2f6e 3b2a7a 1d4f91 0a4f9e 1060b0 2a6cb8 3c8ad0 1580d8 0090d8 3aa6e0 30b0e8 70c4ec 9cd4f0 cbe6f5 " +
  "00402c 005a48 006858 5a7040 007a4a 0a8a50 109a48 1aa050 30b068 00b058 6cb820 8cc83c a0d060 bcd848 cde6c8 " +
  "e4501e ee6a00 f28400 f49a50 f2a400 ffb000 fdb934 fbc82c ffd800 ffec00 fcf07c ffd470 eacb94 ffdcac fde8d0 " +
  "7a3070 843c80 683e90 74529a 98649c a05888 cc7cb0 aa90cc c6a4c8 ecc0da " +
  "5c281a 7a3c30 984e2a a85428 c07840 b4846c deb484 d4cac6 cad4cc " +
  "000000 403838 5a5858 6e6e6e 868886 9ca09e b4b6b4 cccecc dadada ececec ffffff"
).split(" ");

const box = document.getElementById("swatches");
for (const c of colors) {
  const b = document.createElement("button");
  b.style.background = "#" + c;
  b.setAttribute("aria-label", "#" + c);
  box.appendChild(b);
}
```
